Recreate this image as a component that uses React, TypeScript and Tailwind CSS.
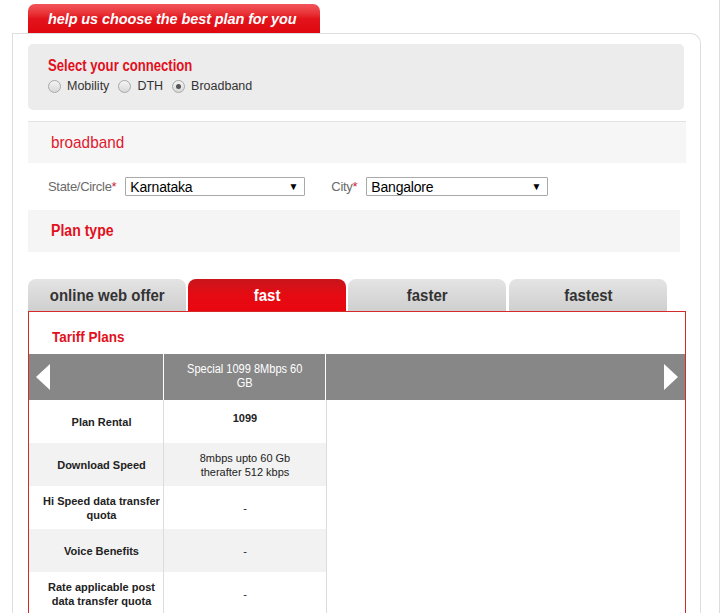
import React from "react";

const arial = { fontFamily: '"Liberation Sans", Arial, sans-serif' };

function Radio({ checked }: { checked?: boolean }) {
  return (
    <span className="inline-flex w-[13px] h-[13px] rounded-full border border-[#a8a8a8] bg-gradient-to-b from-[#f4f4f4] to-[#d8d8d8] items-center justify-center">
      {checked && <span className="w-[5px] h-[5px] rounded-full bg-[#555]" />}
    </span>
  );
}

function Select({ value, width }: { value: string; width: string }) {
  return (
    <div className={`${width} h-[19px] border border-[#a9a9a9] bg-white flex items-center justify-between pl-[4px] pr-[6px] text-[14px] text-black rounded-[1px]`}>
      <span className="leading-none tracking-[-0.2px]">{value}</span>
      <span className="text-[10px] leading-none">▼</span>
    </div>
  );
}

const rows: { label: string; value: React.ReactNode; bold?: boolean }[] = [
  { label: "Plan Rental", value: "1099", bold: true },
  { label: "Download Speed", value: <>8mbps upto 60 Gb<br />therafter 512 kbps</> },
  { label: "Hi Speed data transfer quota", value: "-" },
  { label: "Voice Benefits", value: "-" },
  { label: "Rate applicable post data transfer quota", value: "-" },
];

export default function App() {
  const tabs = ["online web offer", "fast", "faster", "fastest"];
  return (
    <div className="w-[723px] h-[613px] overflow-hidden bg-white" style={arial}>
      <div className="w-[720px] h-[613px] border-r border-[#dcdcdc] pt-[4px]">
        <div className="ml-[28px] w-[292px] h-[29px] rounded-t-[7px] bg-gradient-to-b from-[#f2545b] via-[#e3141c] to-[#e0060f] flex items-center pl-[20px] pt-[2px] text-white text-[14.5px] font-bold italic tracking-[-0.1px]">
          help us choose the best plan for you
        </div>
        <div className="ml-[12px] w-[689px] h-[600px] border border-b-0 border-[#dedede] rounded-tr-[10px] px-[15px] pt-[10px]">
          {/* select connection */}
          <div className="w-[656px] h-[66px] rounded-[5px] bg-[#ececec] pl-[20px] pt-[10px]">
            <div className="h-[19px]">
              <span className="inline-block origin-left scale-x-[0.82] text-[16px] font-bold text-[#e2101d] leading-[19px] whitespace-nowrap">
                Select your connection
              </span>
            </div>
            <div className="flex items-center mt-[4px] text-[12.5px] text-[#333]">
              <Radio />
              <span className="ml-[6px]">Mobility</span>
              <span className="ml-[9px]" />
              <Radio />
              <span className="ml-[6px]">DTH</span>
              <span className="ml-[9px]" />
              <Radio checked />
              <span className="ml-[6px]">Broadband</span>
            </div>
          </div>
          {/* broadband */}
          <div className="mt-[11px] w-[658px] h-[42px] border-t border-[#e2e2e2] bg-[#f6f6f6] flex items-center pl-[23px]">
            <span className="inline-block origin-left scale-x-[0.9] text-[17px] text-[#e0182d] font-medium">broadband</span>
          </div>
          {/* state/city */}
          <div className="flex items-start mt-[13px] h-[20px]">
            <span className="ml-[20px] text-[13px] text-[#6a6a6a] mt-[1px] tracking-[-0.3px]">
              State/Circle<span className="text-[#d0243a]">*</span>
            </span>
            <div className="ml-[9px] mt-[1px]">
              <Select value="Karnataka" width="w-[180px]" />
            </div>
            <span className="ml-[26px] text-[13px] text-[#6a6a6a] mt-[1px] tracking-[-0.3px]">
              City<span className="text-[#d0243a]">*</span>
            </span>
            <div className="ml-[9px] mt-[1px]">
              <Select value="Bangalore" width="w-[182px]" />
            </div>
          </div>
          {/* plan type */}
          <div className="mt-[14px] w-[652px] h-[42px] bg-[#f5f5f5] flex items-center pl-[23px]">
            <span className="inline-block origin-left scale-x-[0.88] text-[16px] font-bold text-[#e2101d]">Plan type</span>
          </div>
          {/* tabs */}
          <div className="mt-[27px] flex gap-[2px] h-[32px]">
            {tabs.map((t, i) => (
              <div
                key={t}
                className={`w-[158px] h-[32px] rounded-t-[8px] flex items-end justify-center pb-[7px] ${
                  i === 1
                    ? "bg-gradient-to-b from-[#c8141b] via-[#e60a12] to-[#e8070f] text-white"
                    : "bg-gradient-to-b from-[#e4e4e4] to-[#cfcfcf] text-[#333]"
                } ${i === 3 ? "ml-[1px]" : ""}`}
              >
                <span className="inline-block scale-x-[0.88] text-[17px] font-bold leading-none whitespace-nowrap">{t}</span>
              </div>
            ))}
          </div>
          {/* tariff box */}
          <div className="w-[658px] h-[320px] border border-b-0 border-[#d42a2a]">
            <div className="h-[42px] pl-[23px] pt-[13px]">
              <span className="inline-block origin-left scale-x-[0.9] text-[15px] font-bold text-[#e2101d]">Tariff Plans</span>
            </div>
            <div className="h-[46px] bg-[#878787] flex">
              <div className="w-[135px] flex items-center pl-[7px] border-r border-white">
                <svg width="14" height="26" viewBox="0 0 14 26">
                  <polygon points="14,0 14,26 0,13" fill="white" />
                </svg>
              </div>
              <div className="w-[162px] flex items-center justify-center text-center text-white text-[12px] leading-[14px] border-r border-white pb-[2px]">
                <span className="inline-block scale-x-[0.92]">
                  Special 1099 8Mbps 60
                  <br />
                  GB
                </span>
              </div>
              <div className="flex-1 flex items-center justify-end pr-[7px]">
                <svg width="14" height="26" viewBox="0 0 14 26">
                  <polygon points="0,0 0,26 14,13" fill="white" />
                </svg>
              </div>
            </div>
            <div className="w-[298px] border-r border-[#dcdcdc]">
              {rows.map((r, i) => (
                <div key={r.label} className={`flex h-[43px] ${i % 2 === 1 ? "bg-[#f2f2f2]" : "bg-white"}`}>
                  <div className="w-[135px] border-r border-[#dcdcdc] flex items-center justify-center text-center text-[11px] font-bold text-[#222] leading-[14px] pl-[12px] pr-[1px]">
                    {r.label}
                  </div>
                  <div
                    className={`flex-1 flex items-center justify-center text-center text-[11px] text-[#222] leading-[14px] ${r.bold ? "font-bold pb-[8px]" : ""}`}
                  >
                    <span>{r.value}</span>
                  </div>
                </div>
              ))}
            </div>
          </div>
        </div>
      </div>
    </div>
  );
}
